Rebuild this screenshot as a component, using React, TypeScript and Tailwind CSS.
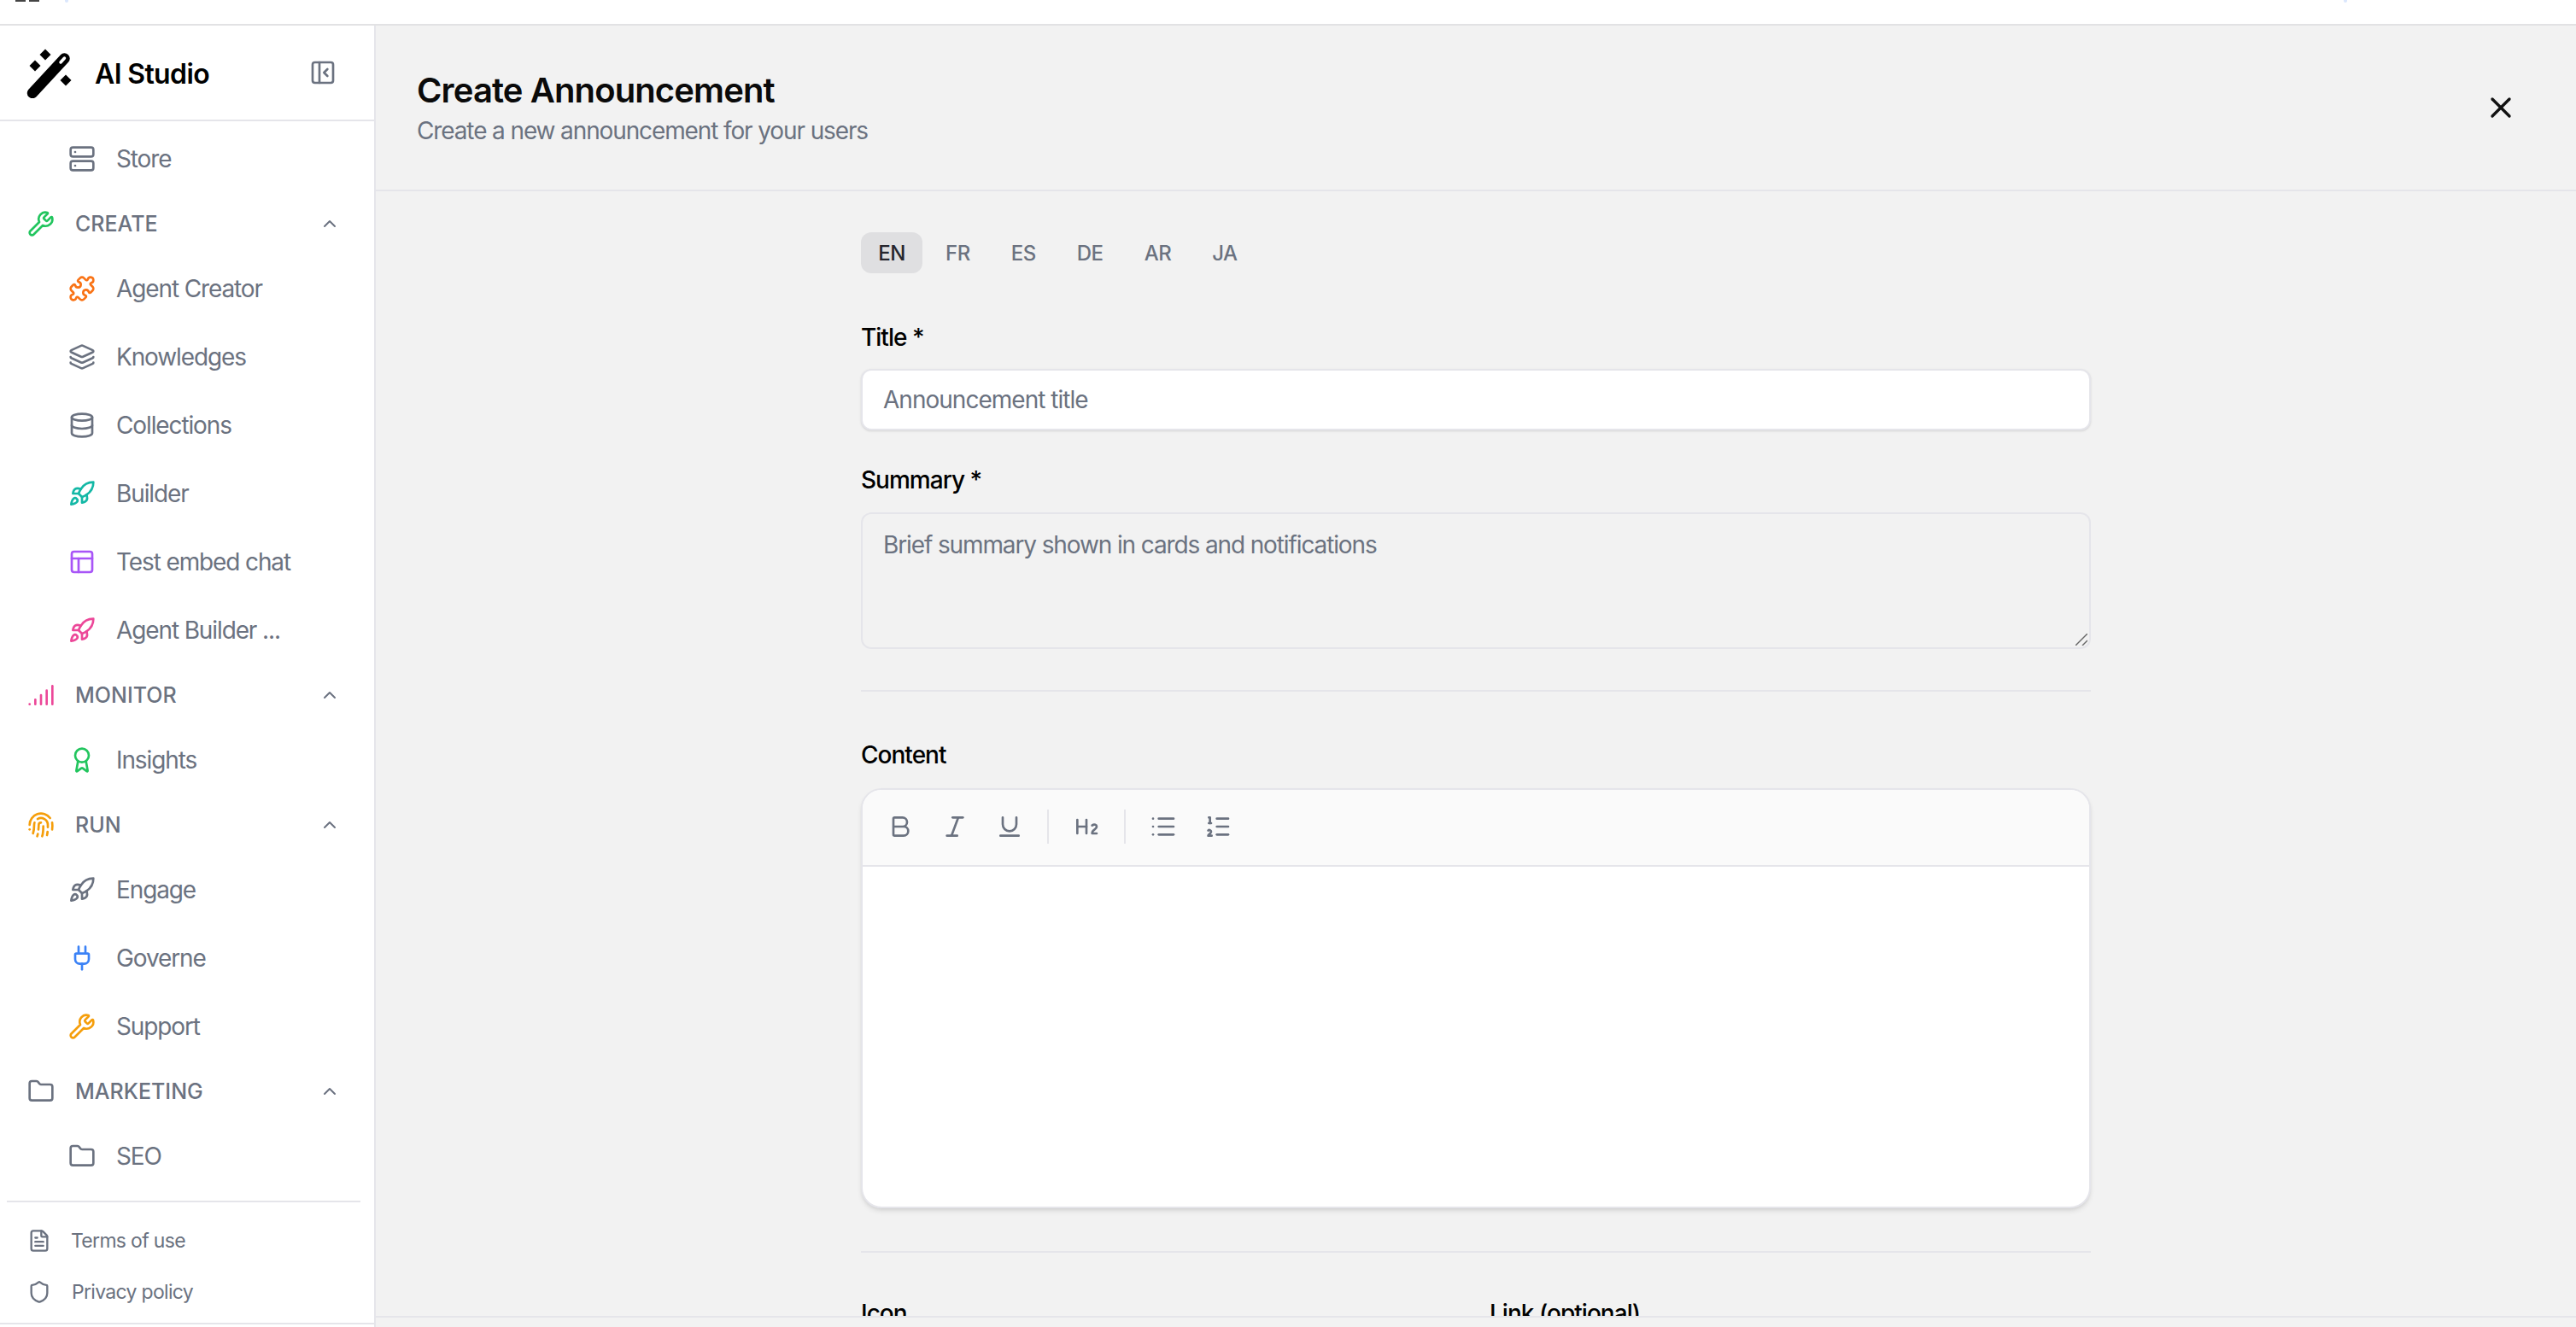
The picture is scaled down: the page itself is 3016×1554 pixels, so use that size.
import React from "react";
import {
  Award, Bold, ChevronUp, Database, FileText, Fingerprint, Folder, Heading2, Italic, Layers, List, ListOrdered,
  PanelLeftClose, PanelsTopLeft, Plug, Puzzle, Rocket, Server, Shield, Signal, Underline, Wrench, X,
} from "lucide-react";

const font = { fontFamily: '"Inter", "Liberation Sans", sans-serif' };

function Item({ icon: Icon, label, color = "text-[#6b7280]" }: { icon: any; label: string; color?: string }) {
  return (
    <div className="flex h-[80px] items-center gap-[24px] pl-[80px]">
      <Icon size={32} className={`${color} shrink-0`} />
      <span className="text-[28px] tracking-[-0.04em] text-[#6b7280]">{label}</span>
    </div>
  );
}

function Section({ icon: Icon, label, color = "text-[#6b7280]" }: { icon: any; label: string; color?: string }) {
  return (
    <div className="flex h-[72px] items-center gap-[24px] pl-[32px] pr-[40px]">
      <Icon size={32} className={`${color} shrink-0`} />
      <span className="flex-1 pt-[1px] text-[25px] font-medium text-[#6b7280]">{label}</span>
      <ChevronUp size={24} className="text-[#6b7280]" />
    </div>
  );
}

function Sidebar() {
  return (
    <aside className="flex w-[440px] shrink-0 flex-col border-r-2 border-[#e5e5ea] bg-white">
      <div className="flex h-[112px] shrink-0 items-center border-b-2 border-[#e5e5ea] pl-[27px] pr-[44px]">
        <svg width="60" height="60" viewBox="0 0 60 60" className="shrink-0">
          <line x1="48.5" y1="13.5" x2="11" y2="54" stroke="#000" strokeWidth="12.5" strokeLinecap="round" />
          <line x1="48.5" y1="13" x2="44" y2="18" stroke="#fff" strokeWidth="3.5" strokeLinecap="round" />
          <path d="M26 2.5 32.5 9 26 15.5 19.5 9Z" fill="#000" />
          <path d="M14 15.5 20.5 22 14 28.5 7.5 22Z" fill="#000" />
          <path d="M50 32.5 56.5 39 50 45.5 43.5 39Z" fill="#000" />
        </svg>
        <span className="ml-[24px] mt-[3px] flex-1 text-[32px] font-semibold tracking-[-0.02em] text-black">AI Studio</span>
        <PanelLeftClose size={32} className="text-[#6b7280]" />
      </div>
      <nav className="flex flex-col pt-[4px]">
        <Item icon={Server} label="Store" />
        <Section icon={Wrench} label="CREATE" color="text-[#22c55e]" />
        <Item icon={Puzzle} label="Agent Creator" color="text-[#f97316]" />
        <Item icon={Layers} label="Knowledges" />
        <Item icon={Database} label="Collections" />
        <Item icon={Rocket} label="Builder" color="text-[#14b8a6]" />
        <Item icon={PanelsTopLeft} label="Test embed chat" color="text-[#a855f7]" />
        <Item icon={Rocket} label="Agent Builder ..." color="text-[#ec4899]" />
        <Section icon={Signal} label="MONITOR" color="text-[#ec4899]" />
        <Item icon={Award} label="Insights" color="text-[#22c55e]" />
        <Section icon={Fingerprint} label="RUN" color="text-[#f59e0b]" />
        <Item icon={Rocket} label="Engage" />
        <Item icon={Plug} label="Governe" color="text-[#3b82f6]" />
        <Item icon={Wrench} label="Support" color="text-[#f59e0b]" />
        <Section icon={Folder} label="MARKETING" />
        <Item icon={Folder} label="SEO" />
      </nav>
      <div className="mx-[8px] mt-[12px] w-[414px] border-t-2 border-[#e5e5ea] pt-[15px]">
        <div className="flex h-[60px] items-center gap-[23px] pl-[24px]">
          <FileText size={28} className="text-[#6b7280]" />
          <span className="text-[23px] tracking-[-0.03em] text-[#6b7280]">Terms of use</span>
        </div>
        <div className="flex h-[60px] items-center gap-[24px] pl-[24px]">
          <Shield size={28} className="text-[#6b7280]" />
          <span className="text-[23px] tracking-[-0.03em] text-[#6b7280]">Privacy policy</span>
        </div>
      </div>
      <div className="mt-[6px] h-[2px] bg-[#e5e5ea]" />
    </aside>
  );
}

function ToolButton({ icon: Icon }: { icon: any }) {
  return (
    <div className="flex h-[56px] w-[56px] items-center justify-center">
      <Icon size={32} className="text-[#6b7280]" />
    </div>
  );
}

const labelClass = "block h-[40px] text-[28px] font-medium leading-[40px] tracking-[-0.035em] text-black";

function Form() {
  const langs = ["FR", "ES", "DE", "AR", "JA"];
  return (
    <div className="mx-auto w-[1440px] pt-[48px]">
      <div className="flex h-[48px] items-center gap-[4px]">
        <span className="mr-[1px] flex h-[48px] w-[72px] items-center justify-center rounded-[12px] bg-[#dfdfe1] pt-[1px] text-[24px] font-medium tracking-[-0.02em] text-[#26262e]">EN</span>
        {langs.map((l) => (
          <span key={l} className="flex h-[48px] items-center justify-center px-[22px] pt-[1px] text-[24px] font-medium tracking-[-0.02em] text-[#6b7280]">{l}</span>
        ))}
      </div>
      <label className={`mt-[55px] ${labelClass}`}>Title *</label>
      <div className="mt-[17px] flex h-[72px] items-center rounded-[12px] border-2 border-[#e5e5ea] bg-white pl-[24px] text-[28px] tracking-[-0.035em] text-[#6b7280] shadow-sm">Announcement title</div>
      <label className={`mt-[38px] ${labelClass}`}>Summary *</label>
      <div className="relative mt-[18px]">
        <textarea
          readOnly
          placeholder="Brief summary shown in cards and notifications"
          className="block h-[160px] w-full resize-none rounded-[12px] border-2 border-[#e5e5ea] bg-transparent px-[24px] py-[16px] text-[28px] leading-[40px] tracking-[-0.04em] text-[#6b7280] outline-none placeholder:text-[#6b7280]"
        />
        <svg width="14" height="14" viewBox="0 0 14 14" className="pointer-events-none absolute bottom-[4px] right-[4px]">
          <line x1="0" y1="14" x2="14" y2="0" stroke="#666" strokeWidth="1.4" />
          <line x1="8" y1="14" x2="14" y2="8" stroke="#666" strokeWidth="1.4" />
        </svg>
      </div>
      <div className="mt-[48px] h-[2px] bg-[#e5e5ea]" />
      <label className={`mt-[54px] ${labelClass}`}>Content</label>
      <div className="mt-[19px] h-[492px] overflow-hidden rounded-[24px] border-2 border-[#e5e5ea] bg-white shadow-md">
        <div className="flex h-[90px] items-center gap-[8px] border-b-2 border-[#e5e5ea] bg-[#fafafa] pb-[3px] pl-[16px]">
          <ToolButton icon={Bold} />
          <ToolButton icon={Italic} />
          <ToolButton icon={Underline} />
          <div className="mx-[8px] h-[40px] w-[2px] bg-[#e5e5ea]" />
          <ToolButton icon={Heading2} />
          <div className="mx-[8px] h-[40px] w-[2px] bg-[#e5e5ea]" />
          <ToolButton icon={List} />
          <ToolButton icon={ListOrdered} />
        </div>
      </div>
      <div className="mt-[50px] h-[2px] bg-[#e5e5ea]" />
      <div className="mt-[51px] grid grid-cols-2 gap-[32px]">
        <label className={labelClass}>Icon</label>
        <label className={labelClass}>Link (optional)</label>
      </div>
    </div>
  );
}

export default function App() {
  return (
    <div style={font} className="flex h-[1554px] w-[3016px] flex-col overflow-hidden bg-white">
      <div className="flex h-[30px] shrink-0 items-start border-b-2 border-[#e2e2e4] bg-white">
        <span className="ml-[18px] h-[2px] w-[12px] bg-[#444]" />
        <span className="ml-[4px] h-[2px] w-[12px] bg-[#444]" />
        <span className="ml-[30px] h-[3px] w-[4px] rounded-b-sm bg-[#dbe7fd]" />
        <span className="ml-[2664px] h-[3px] w-[4px] rounded-b-sm bg-[#dbe7fd]" />
      </div>
      <div className="flex min-h-0 flex-1">
        <Sidebar />
        <main className="flex min-w-0 flex-1 flex-col bg-[#f2f2f2]">
          <header className="flex h-[194px] shrink-0 items-center justify-between border-b-2 border-[#e5e5ea] pl-[48px] pr-[68px]">
            <div className="mt-[1px]">
              <h1 className="text-[40px] font-semibold leading-[52px] tracking-[-0.022em] text-[#0a0a0a]">Create Announcement</h1>
              <p className="pt-[1px] text-[28px] leading-[40px] tracking-[-0.04em] text-[#6b7280]">Create a new announcement for your users</p>
            </div>
            <X size={40} className="text-[#111]" />
          </header>
          <div className="min-h-0 flex-1 overflow-hidden">
            <Form />
          </div>
          <div className="h-[13px] shrink-0 border-t-2 border-[#e5e5ea] bg-[#f2f2f2]" />
        </main>
      </div>
    </div>
  );
}
